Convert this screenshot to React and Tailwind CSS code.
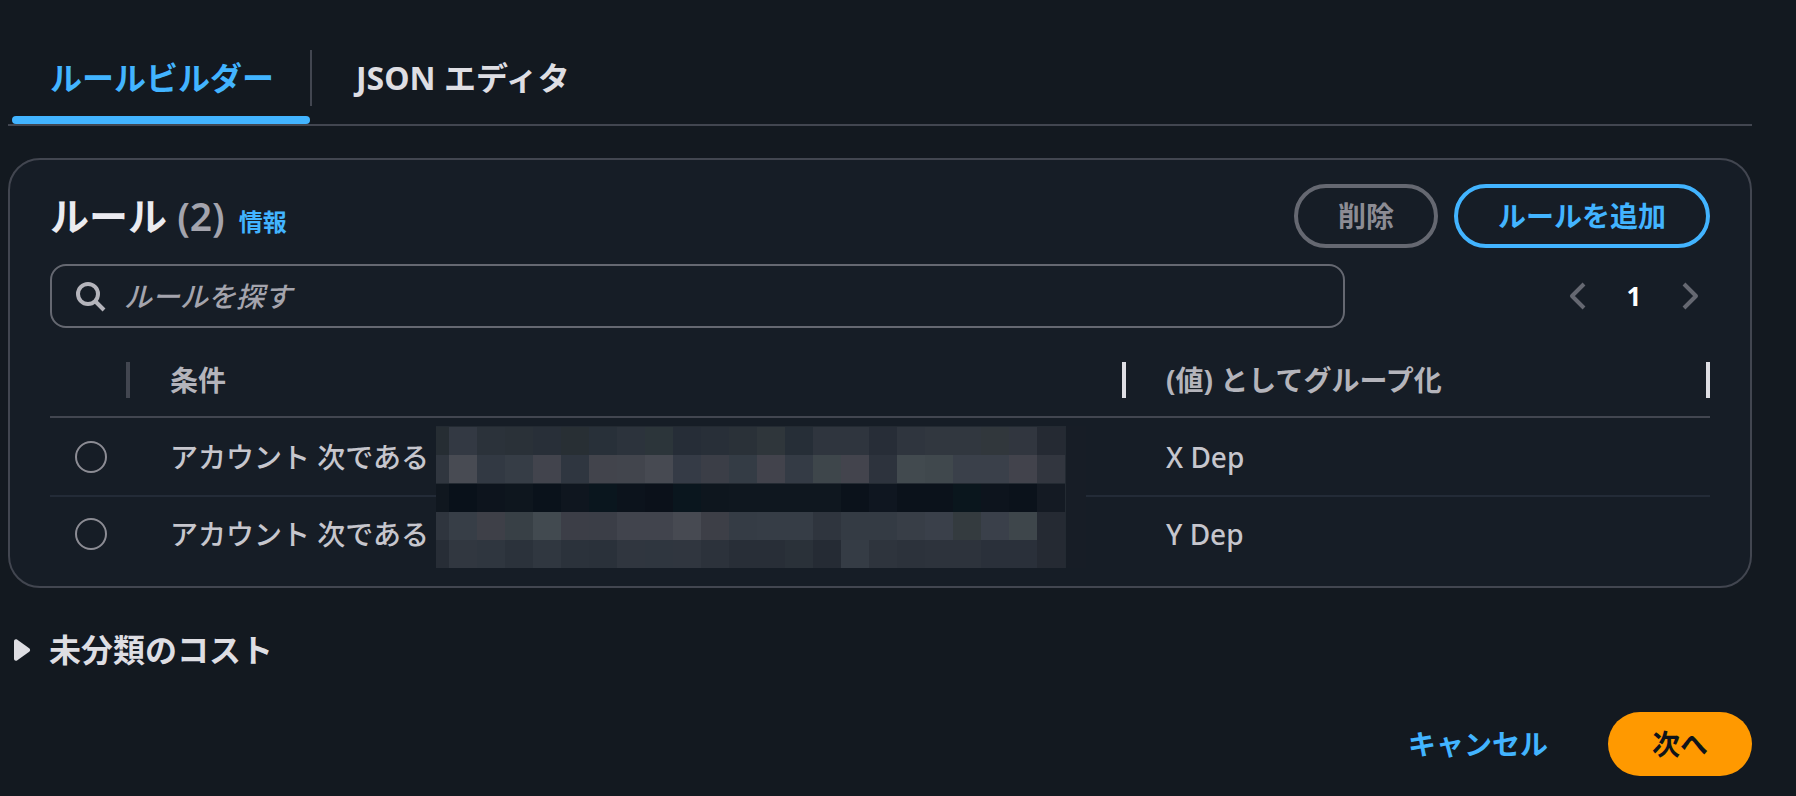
import React, { useState } from 'react';

const RULES = [
  { id: 'x', condition: 'アカウント 次である', value: 'X Dep' },
  { id: 'y', condition: 'アカウント 次である', value: 'Y Dep' },
];

// redacted account names, one colour per mosaic cell
const MOSAIC = [
  '262d33 333943 2b323a 2a3138 282f38 282f34 283039 2c333c 2c353a 262d37 282f38 2a3138 2f363b 262e37 2f353e 2f353e 272d37 2f353e 31373f 31373f 31373c 31363f 252a33',
  '30363f 484b53 323943 363d46 42444d 2f3640 42444c 42454d 474a52 353b46 3b3e47 343c45 42434c 343b45 3e464b 43444d 2d333d 424a4f 40484d 3a404a 3a404a 42434c 32363f',
  '10171f 09111a 0d141d 0e161e 0a121b 0f161f 0a161e 0c131c 0b111a 0a161e 0e161e 0f171f 0f171f 0f171f 0f171f 0b121b 0f1620 0b121b 0b121b 0a161d 0d141d 0b121b 141a23',
  '2f353e 373e47 3e4048 384046 424a50 3c3e47 3b3e47 41444d 41444d 474a52 3d3f47 353c45 363d46 363d46 2f353e 343b44 343b44 383e47 3a404a 343b3f 3a404a 3e464b 252a33',
  '272d36 313740 2f363f 2b323b 303740 2b323b 2a313a 30363f 2f363f 30363f 2c323b 282e37 282e37 2a3139 252b34 353c45 2e343d 2c323b 2d333c 2d333c 2a303a 2a303a 252a33',
].map((r) => r.split(' '));

function Mosaic() {
  return (
    <svg width="650" height="142" shapeRendering="crispEdges" aria-hidden="true">
      <rect x="630" width="20" height="142" fill="#171d26" />
      <rect width="630" height="142" fill="#232a32" />
      {MOSAIC.map((row, r) => row.map((c, i) => (
        <rect key={`${r}-${i}`} x={i === 0 ? 0 : 13 + 28 * (i - 1)} y={r * 28 + 1 + (r > 1 ? 1 : 0)} width={i === 0 ? 13 : 28} height="28" fill={`#${c}`} />
      )))}
    </svg>
  );
}

function Tab({ active, children, onClick }) {
  return (
    <button
      role="tab"
      aria-selected={active}
      onClick={onClick}
      className={`relative pt-[52px] pb-5 text-[32px] leading-[52px] font-bold ${active ? 'text-[#42b4ff]' : 'text-[#dedee3]'}`}
    >
      {children}
      {active && <span className="absolute -left-[38px] -right-9 bottom-0 h-2 rounded-full bg-[#42b4ff]" />}
    </button>
  );
}

function Chevron({ right, label }) {
  return (
    <button disabled aria-label={label} className="flex w-8 justify-center text-[#656871]">
      <svg width="32" height="32" viewBox="0 0 16 16" fill="none" stroke="currentColor" strokeWidth="2" strokeLinejoin="round">
        <path d={right ? 'M5 2l6 6-6 6' : 'M11 2L5 8l6 6'} />
      </svg>
    </button>
  );
}

export default function App() {
  const [tab, setTab] = useState('builder');
  const [selected, setSelected] = useState('');
  const [query, setQuery] = useState('');

  return (
    <div className="min-h-screen bg-[#131920] pl-2 pr-11 font-['Noto_Sans','Noto_Sans_CJK_JP',sans-serif] text-[28px] leading-10 text-[#c6c6cd]">
      <div role="tablist" className="flex items-center border-b-2 border-[#424650]">
        <div className="pl-[42px] pr-9">
          <Tab active={tab === 'builder'} onClick={() => setTab('builder')}>ルールビルダー</Tab>
        </div>
        <span className="mt-8 h-14 w-[2px] bg-[#424650]" />
        <div className="px-11">
          <Tab active={tab === 'json'} onClick={() => setTab('json')}>JSON エディタ</Tab>
        </div>
      </div>

      <section className="mt-8 rounded-[32px] border-2 border-[#424650] bg-[#161d26] px-10 pt-6 pb-4">
        <header className="flex items-center justify-between">
          <div className="flex items-baseline">
            <h2 className="text-[39px] leading-[48px] font-bold text-[#ebebf0]">
              ルール <span className="font-semibold text-[#a4a4ad]">(2)</span>
            </h2>
            <a href="#info" className="ml-[14px] text-2xl font-bold text-[#42b4ff]">情報</a>
          </div>
          <div className="flex gap-4">
            <button disabled className="h-16 rounded-full border-4 border-[#656871] px-10 font-bold text-[#8c8c94]">削除</button>
            <button className="h-16 rounded-full border-4 border-[#42b4ff] px-10 font-bold text-[#42b4ff]">ルールを追加</button>
          </div>
        </header>

        <div className="mt-4 flex items-center justify-between">
          <label className="flex h-16 w-[78%] items-center gap-[18px] rounded-2xl border-2 border-[#656871] px-[22px]">
            <svg width="32" height="32" viewBox="0 0 16 16" fill="none" stroke="#b4b4bb" strokeWidth="2" className="shrink-0">
              <circle cx="7" cy="7" r="5" />
              <path d="M10.5 10.5L15 15" />
            </svg>
            <input
              type="search"
              aria-label="ルールを探す"
              value={query}
              onChange={(e) => setQuery(e.target.value)}
              placeholder="ルールを探す"
              className="w-full bg-transparent font-medium outline-none placeholder:text-[#a4a4ad] placeholder:italic"
            />
          </label>
          <nav className="flex items-center gap-4 pr-1">
            <Chevron label="前のページ" />
            <button aria-current="page" className="w-12 text-[26px] font-bold text-white">1</button>
            <Chevron right label="次のページ" />
          </nav>
        </div>

        <div className="relative mt-4">
          <table className="w-full table-fixed border-collapse text-left">
            <colgroup>
              <col className="w-20" />
              <col />
              <col className="w-[584px]" />
            </colgroup>
            <thead>
              <tr className="h-[73px] border-b-2 border-[#424650] text-[#b4b4bb]">
                <td><span className="ml-auto block h-9 w-1 bg-[#424650]" /></td>
                <th className="pl-10 font-bold">
                  <div className="flex items-center justify-between">条件<span className="h-9 w-1 bg-[#dedee3]" /></div>
                </th>
                <th className="pl-10 font-bold">
                  <div className="flex items-center justify-between">(値) としてグループ化<span className="h-9 w-1 bg-[#dedee3]" /></div>
                </th>
              </tr>
            </thead>
            <tbody>
              {RULES.map((r) => (
                <tr key={r.id} className="h-[79px] border-b-2 border-[#232b37] font-medium last:h-[74px] last:border-0">
                  <td className="pl-[25px]">
                    <input
                      type="radio"
                      name="rule"
                      aria-label={`${r.condition} ${r.value}`}
                      checked={selected === r.id}
                      onChange={() => setSelected(r.id)}
                      className="block size-8 appearance-none rounded-full border-2 border-[#8c8c94] checked:border-8 checked:border-[#42b4ff]"
                    />
                  </td>
                  <td className="pl-10">{r.condition}</td>
                  <td className="pl-10">{r.value}</td>
                </tr>
              ))}
            </tbody>
          </table>
          <div className="absolute top-[82px] left-[386px]"><Mosaic /></div>
        </div>
      </section>

      <button aria-expanded="false" className="mt-10 flex items-center gap-[18px] pl-[6px] text-[32px] font-bold leading-[44px] text-[#dedee3]">
        <svg width="17" height="22" viewBox="0 0 17 22" fill="currentColor">
          <path d="M0 2.2C0 .6 1.6-.3 3 .6l12.2 8.6c1.2.9 1.2 2.7 0 3.6L3 21.4c-1.400.9-3 0-3-1.600z" />
        </svg>
        未分類のコスト
      </button>

      <footer className="mt-10 flex items-center justify-end gap-4 pb-5 font-bold">
        <button className="h-16 px-11 text-[#42b4ff]">キャンセル</button>
        <button className="h-16 rounded-full bg-[#ff9900] px-11 text-[#0f141a]">次へ</button>
      </footer>
    </div>
  );
}
